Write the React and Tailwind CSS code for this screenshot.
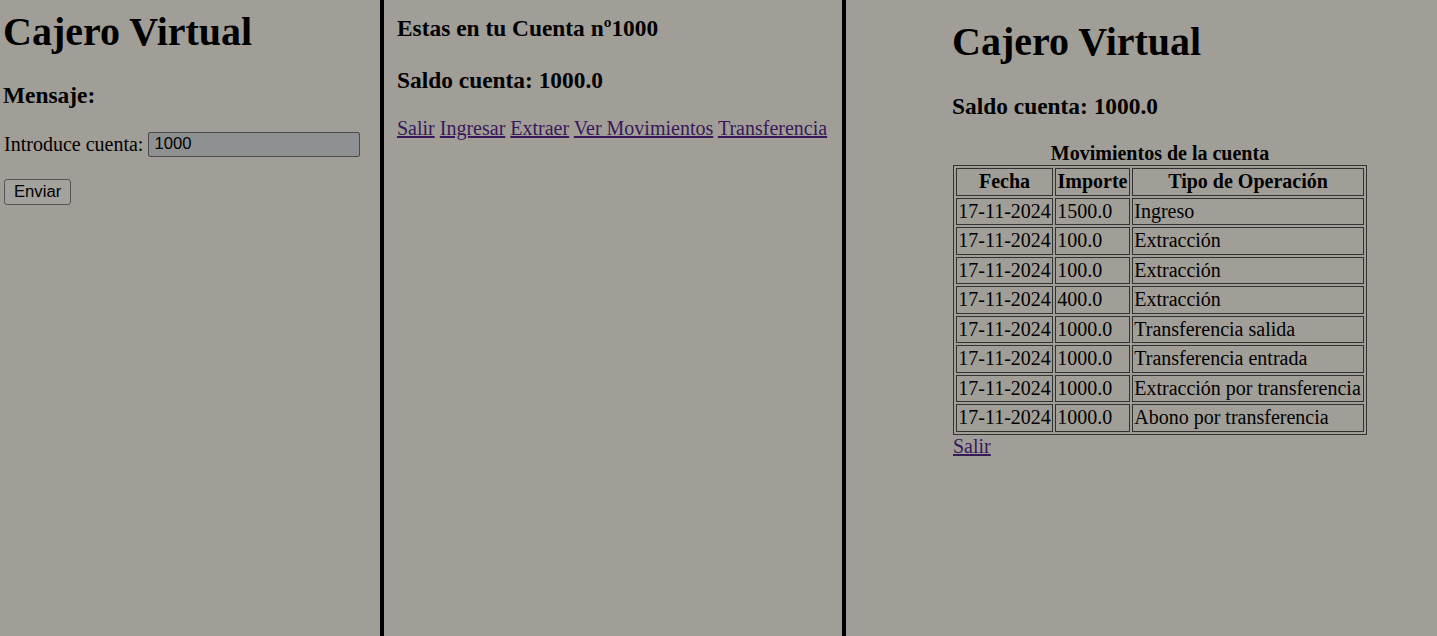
import React from "react";

const rows = [
  ["17-11-2024", "1500.0", "Ingreso"],
  ["17-11-2024", "100.0", "Extracción"],
  ["17-11-2024", "100.0", "Extracción"],
  ["17-11-2024", "400.0", "Extracción"],
  ["17-11-2024", "1000.0", "Transferencia salida"],
  ["17-11-2024", "1000.0", "Transferencia entrada"],
  ["17-11-2024", "1000.0", "Extracción por transferencia"],
  ["17-11-2024", "1000.0", "Abono por transferencia"],
];

const link = "text-[#38195a] underline";

export default function App() {
  return (
    <div className="flex h-[636px] w-[1437px] overflow-hidden bg-[#a19e98] text-black font-['Liberation_Serif',serif]">
      {/* Left panel */}
      <div className="w-[380px] shrink-0 pl-[3px] pt-[8.5px]">
        <h1 className="text-[40px] font-bold leading-[46px]">Cajero Virtual</h1>
        <h3 className="mt-[27px] text-[23.4px] font-bold leading-[27px]">Mensaje:</h3>
        <div className="mt-[23px] flex items-center gap-[5px] pl-[1px]">
          <span className="text-[20px] leading-[23px]">Introduce cuenta:</span>
          <input
            defaultValue="1000"
            className="h-[25px] w-[212px] rounded-[2px] border border-[#4a4a4a] bg-[#8f9092] pl-[5px] text-[16.67px] text-black font-['Liberation_Sans',sans-serif] outline-none"
          />
        </div>
        <button className="ml-[1px] mt-[22px] h-[26px] rounded-[3px] border border-[#555] bg-[#a4a29d] px-[9px] text-[16.67px] leading-[20px] text-black font-['Liberation_Sans',sans-serif]">
          Enviar
        </button>
      </div>

      <div className="w-[4px] shrink-0 bg-black" />

      {/* Middle panel */}
      <div className="w-[458px] shrink-0 pl-[13px] pt-[14.5px]">
        <h3 className="text-[23.4px] font-bold leading-[27px]">Estas en tu Cuenta nº1000</h3>
        <h3 className="mt-[25.5px] text-[23.4px] font-bold leading-[27px]">Saldo cuenta: 1000.0</h3>
        <p className="mt-[22.5px] text-[20px] leading-[23px] whitespace-nowrap">
          <a href="#" className={link}>Salir</a>{" "}
          <a href="#" className={link}>Ingresar</a>{" "}
          <a href="#" className={link}>Extraer</a>{" "}
          <a href="#" className={link}>Ver Movimientos</a>{" "}
          <a href="#" className={link}>Transferencia</a>
        </p>
      </div>

      <div className="w-[4px] shrink-0 bg-black" />

      {/* Right panel */}
      <div className="flex-1 pl-[106px] pt-[19px]">
        <h1 className="text-[40px] font-bold leading-[46px]">Cajero Virtual</h1>
        <h3 className="mt-[27.5px] text-[23.4px] font-bold leading-[27px]">Saldo cuenta: 1000.0</h3>
        <table className="ml-[1px] mt-[22.5px] w-[414px] table-fixed border-separate border-spacing-[2px] border border-[#333] text-[20px] leading-[23px]">
          <caption className="caption-top text-center font-bold leading-[23px]">Movimientos de la cuenta</caption>
          <thead>
            <tr>
              <th className="w-[97px] border border-[#333] p-[1.25px] text-center font-bold">Fecha</th>
              <th className="w-[75px] border border-[#333] p-[1.25px] text-center font-bold">Importe</th>
              <th className="w-[232px] border border-[#333] p-[1.25px] text-center font-bold">Tipo de Operación</th>
            </tr>
          </thead>
          <tbody>
            {rows.map((r, i) => (
              <tr key={i}>
                {r.map((c, j) => (
                  <td key={j} className="whitespace-nowrap border border-[#333] p-[1.25px] text-left">
                    {c}
                  </td>
                ))}
              </tr>
            ))}
          </tbody>
        </table>
        <a href="#" className={`${link} text-[20px] leading-[23px] ml-[1px]`}>Salir</a>
      </div>
    </div>
  );
}
